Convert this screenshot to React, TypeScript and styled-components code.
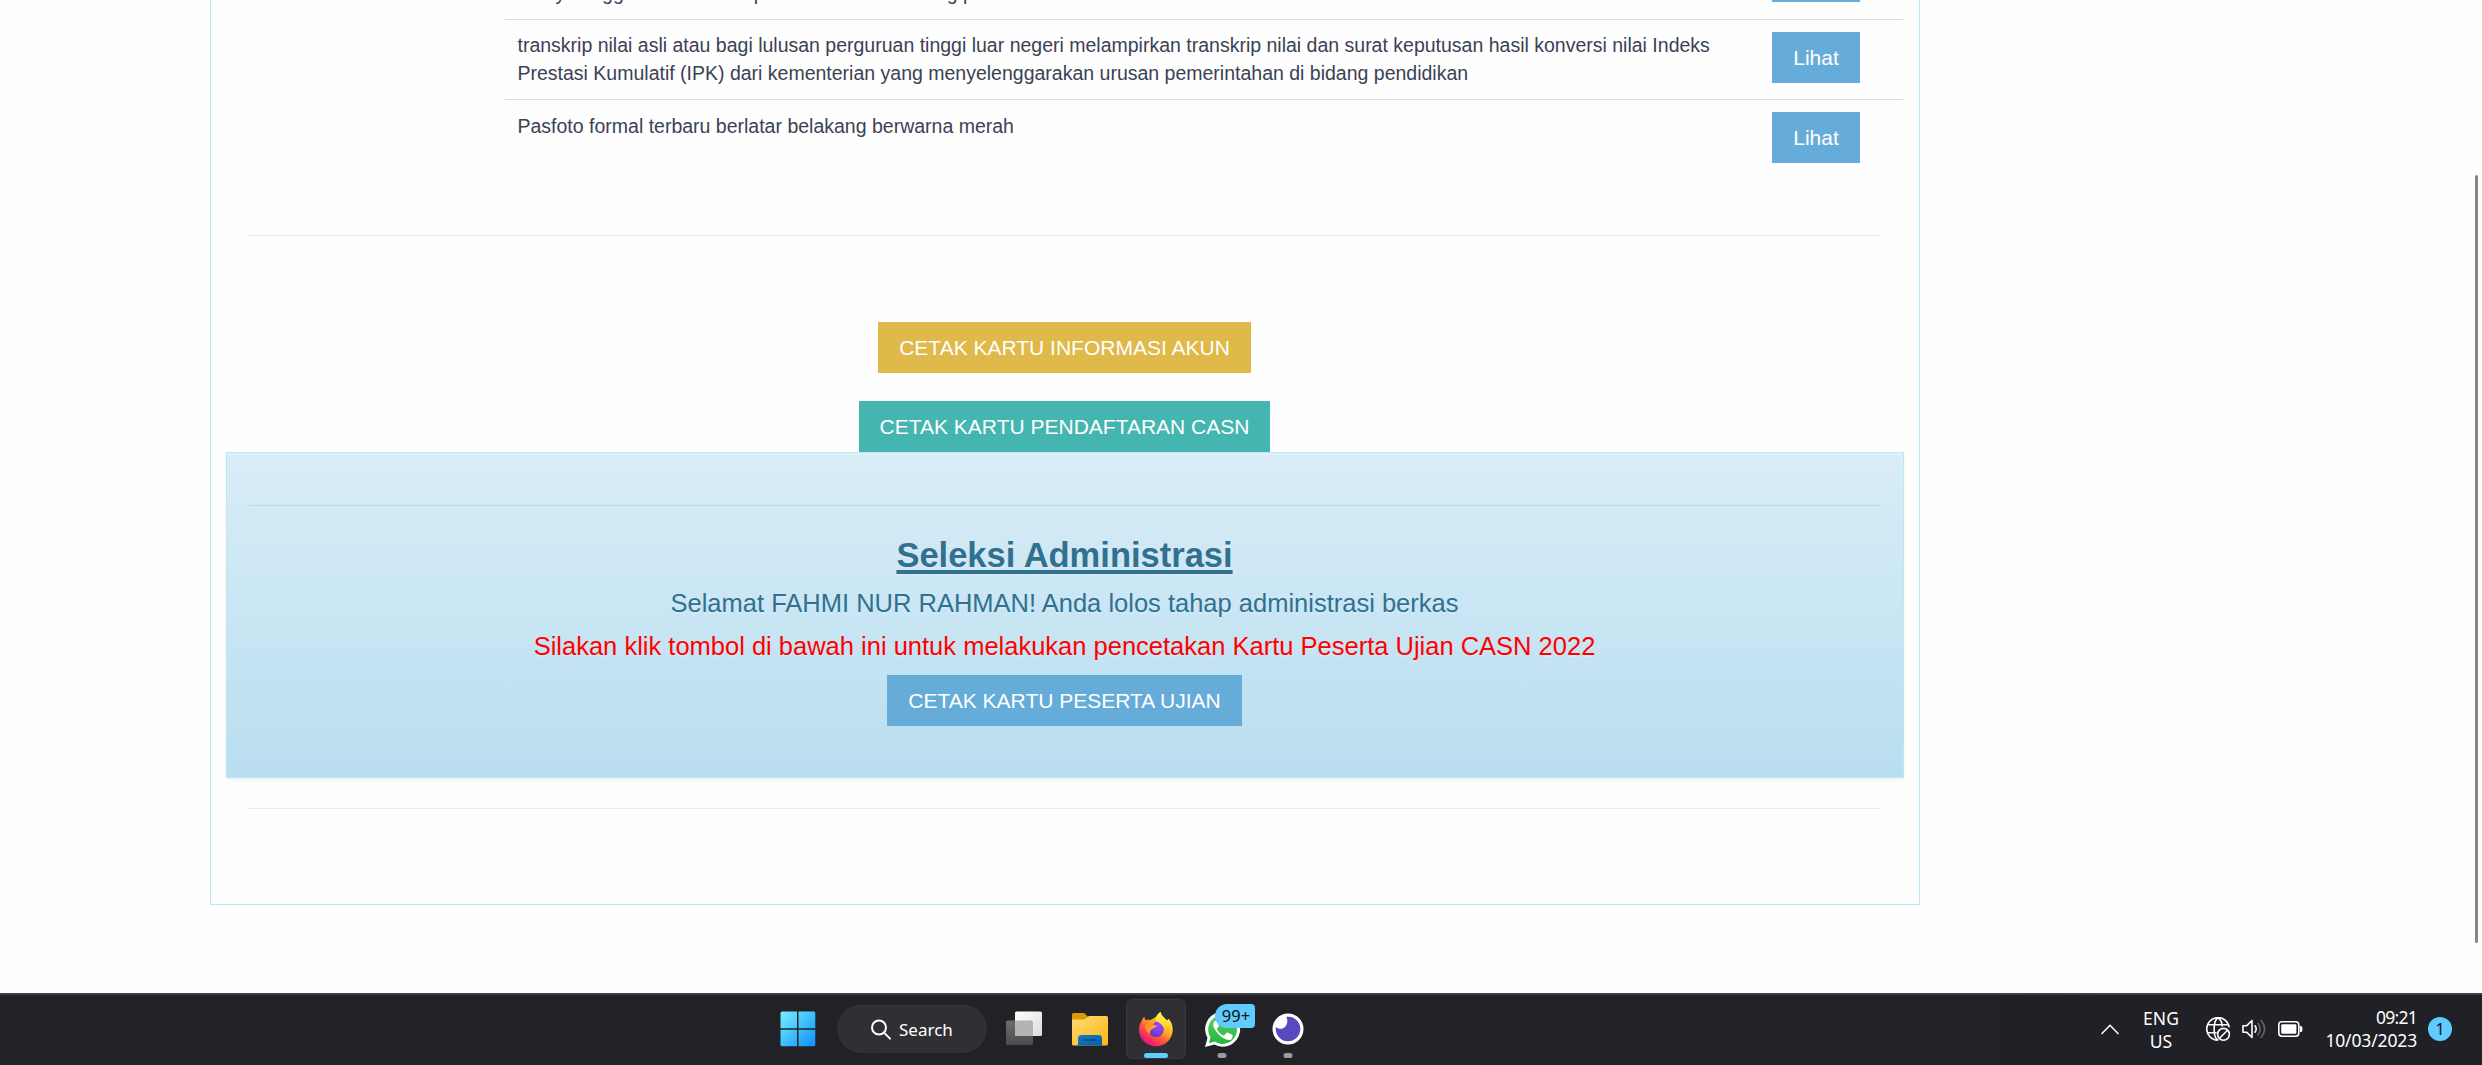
import React from 'react';
import styled, { createGlobalStyle } from 'styled-components';

const GlobalStyle = createGlobalStyle`
  * { box-sizing: border-box; }
  body {
    margin: 0;
    background: #fefefe;
    font-family: "Liberation Sans", Arial, sans-serif;
    overflow: hidden;
  }
`;

const Screen = styled.div`
  display: flex;
  flex-direction: column;
  width: 2482px;
  height: 1065px;
  overflow: hidden;
`;

const Viewport = styled.main`
  position: relative;
  flex: none;
  height: 993px;
  padding-left: 210px;
  overflow: hidden;
`;

const ScrollThumb = styled.div`
  position: absolute;
  top: 175px;
  right: 4px;
  width: 3px;
  height: 768px;
  border-radius: 1.5px;
  background: #868886;
`;

const Panel = styled.section`
  width: 1710px;
  height: 905px;
  border: 1px solid #b8e9f3;
  border-top: 0;
  padding: 0 15px;
  background: #fefefe;
`;

const Documents = styled.div`
  display: flex;
  flex-direction: column;
  justify-content: flex-end;
  width: 1398px;
  height: 179px;
  margin-left: 279px;
  overflow: hidden;
`;

const DocumentRow = styled.div<{ $height?: number }>`
  display: grid;
  flex: none;
  grid-template-columns: 1254.5px 88px;
  align-items: start;
  height: ${(p) => p.$height ?? 80}px;
  padding: 12px 0 0 12.5px;
  border-top: 1px solid #ddd;
`;

const DocumentText = styled.div<{ $raised?: boolean }>`
  margin-top: ${(p) => (p.$raised ? -1 : 0)}px;
  font-size: 19.5px;
  line-height: 28px;
  color: #3a4254;
  white-space: nowrap;
`;

const tones = { blue: '#65acd9', gold: '#dfb949', teal: '#45b5b0' };

const Button = styled.button<{ $tone: keyof typeof tones; $width?: number }>`
  flex: none;
  width: ${(p) => (p.$width ? `${p.$width}px` : 'auto')};
  height: 51px;
  padding: 0;
  border: 0;
  background: ${(p) => tones[p.$tone]};
  color: #fff;
  font: 21px/51px "Liberation Sans", Arial, sans-serif;
  text-align: center;
  white-space: nowrap;
`;

const Divider = styled.hr<{ $tone?: string; $top: number; $right: number }>`
  height: 1px;
  margin: ${(p) => p.$top}px ${(p) => p.$right}px 0 22px;
  border: 0;
  background: ${(p) => p.$tone ?? '#ececec'};
`;

const PrintActions = styled.div`
  display: flex;
  flex-direction: column;
  align-items: center;
  gap: 28px;
  padding: 86px 1px 0 0;
`;

const Notice = styled.div`
  height: 326px;
  padding-right: 1px;
  border: 1px solid #b8e9f3;
  background: linear-gradient(to bottom, #d9edf7 0%, #b9def0 100%);
  box-shadow: inset 0 2px 0 rgba(255, 255, 255, 0.25), 0 2px 3px rgba(0, 0, 0, 0.05);
  color: #31708f;
  text-align: center;
  text-shadow: 0 1.5px 0 rgba(255, 255, 255, 0.2);

  ${Button} {
    margin-top: 15px;
    text-shadow: none;
  }
`;

const NoticeTitle = styled.h3`
  margin: 30px 0 0;
  font-size: 34.5px;
  line-height: 38px;
  font-weight: 700;
  text-decoration: underline;
  text-decoration-thickness: 4px;
  text-underline-offset: 3px;
`;

const NoticeText = styled.p<{ $alert?: boolean }>`
  margin: 15px 0 0;
  font-size: 25.5px;
  line-height: 28px;
  color: ${(p) => (p.$alert ? '#f00' : 'inherit')};
`;

const Taskbar = styled.footer`
  display: flex;
  flex: none;
  justify-content: space-between;
  height: 72px;
  border-top: 2px solid #3f3f43;
  background: linear-gradient(to right, #232228, #222126 60%, #1f2126);
  color: #fff;
  font-family: "Noto Sans", "Open Sans", sans-serif;
  font-size: 17.5px;
`;

const AppStrip = styled.nav`
  display: flex;
  align-items: flex-start;
  padding-left: 765px;
`;

const AppSlot = styled.div<{ $active?: boolean }>`
  position: relative;
  display: flex;
  align-items: center;
  justify-content: center;
  width: 66px;
  height: 60px;
  margin-top: 4px;

  &::before {
    content: "";
    position: absolute;
    inset: 0 3px;
    border-radius: 6px;
    border: 1px solid ${(p) => (p.$active ? '#39393d' : 'transparent')};
    background: ${(p) => (p.$active ? '#2f2f33' : 'transparent')};
  }

  svg {
    position: relative;
    display: block;
  }
`;

const RunMark = styled.span<{ $active?: boolean }>`
  position: absolute;
  left: 50%;
  bottom: 1px;
  width: ${(p) => (p.$active ? 24 : 9)}px;
  height: 5px;
  border-radius: 2.5px;
  background: ${(p) => (p.$active ? '#60cdff' : '#9b9b9d')};
  transform: translateX(-50%);
`;

const CountBadge = styled.span`
  position: absolute;
  top: 5px;
  left: 26px;
  width: 40px;
  height: 24px;
  padding-left: 2px;
  border-radius: 12px 4px 4px 12px;
  background: #5fcbff;
  color: #111;
  font-size: 16.5px;
  line-height: 24px;
  text-align: center;
`;

const SearchPill = styled.div`
  display: flex;
  align-items: center;
  gap: 7px;
  width: 150px;
  height: 48px;
  margin: 10px 4px 0 6px;
  padding-left: 33px;
  border-radius: 24px;
  border-top: 1px solid #37373c;
  background: #302f34;
  font-size: 17px;
`;

const Tray = styled.div`
  display: flex;
  align-items: center;
  height: 68px;
  padding-right: 30px;

  svg {
    display: block;
    flex: none;
  }
`;

const Language = styled.div`
  width: 84px;
  padding-top: 2px;
  line-height: 23px;
  text-align: center;
`;

const Clock = styled.div`
  width: 94px;
  line-height: 23px;
  text-align: right;
  white-space: nowrap;
`;

const ClockTime = styled.div`
  letter-spacing: -0.75px;
`;

const ClockDate = styled.div`
  letter-spacing: -0.15px;
`;

const StatusIcons = styled.div`
  display: flex;
  align-items: center;
  gap: 12px;
  margin: 0 20px 0 3px;
`;

const AlertCount = styled.span`
  width: 24px;
  height: 24px;
  margin-left: 11px;
  border-radius: 50%;
  background: #5fcbff;
  color: #111;
  font-size: 16px;
  line-height: 24px;
  text-align: center;
`;

const WindowsLogo = () => (
  <svg width="36" height="36" viewBox="0 0 36 36">
    <defs>
      <linearGradient id="win" gradientUnits="userSpaceOnUse" x1="0" y1="0" x2="36" y2="36">
        <stop offset="0" stopColor="#7af0ff" />
        <stop offset="0.5" stopColor="#3fc0fb" />
        <stop offset="1" stopColor="#0a8dfa" />
      </linearGradient>
    </defs>
    <g fill="url(#win)">
      <path d="M2 .5h15v16.8H.5V2Q.5.5 2 .5Z" />
      <path d="M18.5.5h15.2q1.6 0 1.6 1.5v15.3H18.5Z" />
      <path d="M.5 18.8h16.5v16.5H2Q.5 35.3.5 33.8Z" />
      <path d="M18.5 18.8h16.8v15q0 1.5-1.5 1.5h-15.3Z" />
    </g>
  </svg>
);

const SearchIcon = () => (
  <svg width="22" height="22" viewBox="0 0 22 22" fill="none" stroke="#fff" strokeWidth="2" strokeLinecap="round">
    <circle cx="9" cy="8.5" r="7" />
    <path d="M14 13.6l6 6" />
  </svg>
);

const TaskViewIcon = () => (
  <svg width="38" height="36" viewBox="0 0 38 36">
    <defs>
      <linearGradient id="tvBack" x1="0" y1="0" x2="1" y2="1">
        <stop offset="0" stopColor="#fff" />
        <stop offset="1" stopColor="#dcdcdc" />
      </linearGradient>
      <linearGradient id="tvFront" x1="0" y1="0" x2="0" y2="1">
        <stop offset="0" stopColor="#6c6c6c" />
        <stop offset="1" stopColor="#4c4c4c" />
      </linearGradient>
    </defs>
    <rect x="1" y="9.5" width="27" height="24.5" rx="1.5" fill="url(#tvFront)" />
    <rect x="10" y=".5" width="27" height="24.5" rx="1.5" fill="url(#tvBack)" />
    <path d="M10 9.5h16.5q1.5 0 1.5 1.5v14H11.5q-1.5 0-1.5-1.5Z" fill="#b4b4b4" />
  </svg>
);

const ExplorerIcon = () => (
  <svg width="36" height="34" viewBox="0 0 36 34">
    <defs>
      <linearGradient id="folder" x1="0" y1="0" x2="1" y2="1">
        <stop offset="0" stopColor="#ffdb75" />
        <stop offset="1" stopColor="#fcb714" />
      </linearGradient>
      <linearGradient id="folderTab" x1="0" y1="0" x2="1" y2="1">
        <stop offset="0" stopColor="#0f7bd0" />
        <stop offset="1" stopColor="#0560a8" />
      </linearGradient>
    </defs>
    <path d="M0 2.5Q0 1 1.5 1h9.5q1.2 0 2 .8L16 5v4H0Z" fill="#dc9a05" />
    <path d="M0 7.5h11.5q1 0 1.8-.8l2.4-2q.8-.7 1.8-.7H34.5q1.5 0 1.5 1.5V32q0 1.500-1.500 1.500h-33Q0 33.500 0 32Z" fill="url(#folder)" />
    <path d="M6 33.5V26.5q0-3.5 3.5-3.5h17q3.500 0 3.500 3.500v7Z" fill="url(#folderTab)" />
    <path d="M11.500 28h13" stroke="#05457c" strokeWidth="1.600" strokeLinecap="round" />
  </svg>
);

const FirefoxIcon = () => (
  <svg width="36" height="36" viewBox="0 0 36 36">
    <defs>
      <linearGradient id="fxBody" x1="0.85" y1="0.1" x2="0.2" y2="0.95">
        <stop offset="0" stopColor="#fff04a" />
        <stop offset="0.35" stopColor="#ffae24" />
        <stop offset="0.6" stopColor="#ff5b36" />
        <stop offset="0.85" stopColor="#f5236b" />
        <stop offset="1" stopColor="#e01585" />
      </linearGradient>
      <linearGradient id="fxFlame" x1="0.5" y1="0" x2="0.6" y2="1">
        <stop offset="0" stopColor="#fff35c" />
        <stop offset="0.6" stopColor="#ffd42d" />
        <stop offset="1" stopColor="#ff9b22" />
      </linearGradient>
      <radialGradient id="fxGlobe" cx="0.65" cy="0.25" r="0.8">
        <stop offset="0" stopColor="#a844f0" />
        <stop offset="0.6" stopColor="#7542e5" />
        <stop offset="1" stopColor="#5a35b0" />
      </radialGradient>
      <linearGradient id="fxFace" x1="0" y1="0" x2="1" y2="0.3">
        <stop offset="0" stopColor="#ff7a28" />
        <stop offset="1" stopColor="#ffb027" />
      </linearGradient>
    </defs>
    <path d="M4 9.5C4.300 8 5.200 6.600 6.300 5.800 6.400 7.200 7 8.300 7.900 9.200 9.500 8.700 11 8.800 12.200 9.200L22 3.500 29 9.500 30.500 7.800C33.500 11 35 15 34.700 19.500 34.200 28.500 27 35.300 18 35.300 8.600 35.300 1 28 1 18.700 1 15.200 2.100 12 4 9.500Z" fill="url(#fxBody)" />
    <circle cx="18.3" cy="18.3" r="7.6" fill="url(#fxGlobe)" />
    <path d="M18 8.500C17.600 5.500 19.700 2.300 22.600.7 23.200 4 25.600 6 28 8.600 31.600 12.500 31.500 19.500 28 24 28.300 19.500 25.800 15.500 22.300 12.500 20.500 11 18.400 10.200 18 8.500Z" fill="url(#fxFlame)" />
    <path d="M7.700 9.300C10 8.500 12 8.900 13.300 10L14.800 13.800 18.700 14.600C18.400 16.400 16.300 16.900 14.400 17.900 12.400 19 11.700 20.700 12.300 22.400 9.200 22 7.400 19.500 7 16.600Z" fill="url(#fxFace)" />
    <path d="M13.300 10C14.400 8.300 16 7.400 17.600 7 16.500 8.500 16.300 10 16.800 11.200L14.800 13.800Z" fill="#ffa52a" />
  </svg>
);

const WhatsAppIcon = () => (
  <svg width="37" height="37" viewBox="0 0 37 37">
    <defs>
      <linearGradient id="wa" x1="0" y1="0" x2="0" y2="1">
        <stop offset="0" stopColor="#5bd066" />
        <stop offset="1" stopColor="#27b43e" />
      </linearGradient>
    </defs>
    <path d="M1 36l2.500-9A17.500 17.500 0 1 1 10.300 33.600Z" fill="#fff" />
    <path d="M4.900 32.200l1.600-5.800A14.400 14.400 0 1 1 10.700 30.600Z" fill="url(#wa)" />
    <path d="M13.500 10.300c-.4-.9-.8-.9-1.300-.9-1 0-3 1.200-3 4.200 0 2.800 2.100 5.500 2.400 5.900.3.400 4.100 6.500 10.100 8.800 5 1.900 6-.1 6.600-1.600.4-1.300.5-2.500.2-2.700-.3-.3-4.500-2.400-5.100-2.500-.4-.1-.8 0-1.200.5l-1.600 2c-.4.5-.8.5-1.400.2-2.700-1.200-4.700-3-6.200-5.700-.3-.6 0-.9.300-1.200.8-.8 1.700-1.700 1.400-2.600Z" fill="#fff" />
  </svg>
);

const EyeIcon = () => (
  <svg width="32" height="32" viewBox="0 0 32 32">
    <circle cx="16" cy="16" r="15.5" fill="#fff" />
    <path d="M14.2 3.800A12.300 12.300 0 1 1 3.900 14C6.500 16.600 11 16.200 13.400 13.400 15.600 10.600 16 6.800 14.200 3.800Z" fill="#5949bf" />
  </svg>
);

const ChevronIcon = () => (
  <svg width="18" height="11" viewBox="0 0 18 11" fill="none" stroke="#fff" strokeWidth="1.5">
    <path d="M.5 10L9 1.300 17.500 10" />
  </svg>
);

const GlobeOffIcon = () => (
  <svg width="24" height="24" viewBox="0 0 24 24" fill="none" stroke="#fff" strokeWidth="1.6">
    <path d="M23.200 10.300A11.300 11.300 0 1 0 11.800 23.200" />
    <path d="M12.500 23C7 22 6.500 4 12 .8 14.800 2.500 16 6 16.300 9.500M1.500 7.800h21M1.500 15.800h9" />
    <circle cx="17.5" cy="17.3" r="5.9" />
    <path d="M13.500 21.300l8-8" />
  </svg>
);

const SpeakerIcon = () => (
  <svg width="24" height="20" viewBox="0 0 24 20" fill="none" strokeWidth="1.6" strokeLinecap="round">
    <path d="M1 6.800h3.500L10 1.500v17L4.500 13.200H1Z" stroke="#fff" strokeLinejoin="round" />
    <path d="M13 6.800q2.400 3.200 0 6.400" stroke="#fff" />
    <path d="M16 4.300q4.300 5.700 0 11.400M19.200 1.500q6.800 8.500 0 17" stroke="#66666a" />
  </svg>
);

const BatteryIcon = () => (
  <svg width="25" height="16" viewBox="0 0 25 16">
    <rect x=".8" y=".8" width="20" height="14.4" rx="3.2" fill="none" stroke="#fff" strokeWidth="1.6" />
    <rect x="3.2" y="3.2" width="15.2" height="9.6" rx="1.2" fill="#fff" />
    <path d="M22 5h.8q1.500 0 1.500 1.500v3q0 1.500-1.500 1.500H22Z" fill="#fff" />
  </svg>
);

export default function App() {
  return (
    <Screen>
      <GlobalStyle />
      <Viewport>
        <Panel>
          <Documents>
            <DocumentRow $height={81}>
              <DocumentText>
                Surat keputusan penyetaraan ijazah dari kementerian yang
                <br />
                menyelenggarakan urusan pemerintahan di bidang pendidikan
              </DocumentText>
              <Button $tone="blue">Lihat</Button>
            </DocumentRow>
            <DocumentRow>
              <DocumentText $raised>
                transkrip nilai asli atau bagi lulusan perguruan tinggi luar negeri melampirkan transkrip nilai dan
                surat keputusan hasil konversi nilai Indeks
                <br />
                Prestasi Kumulatif (IPK) dari kementerian yang menyelenggarakan urusan pemerintahan di bidang
                pendidikan
              </DocumentText>
              <Button $tone="blue">Lihat</Button>
            </DocumentRow>
            <DocumentRow>
              <DocumentText>Pasfoto formal terbaru berlatar belakang berwarna merah</DocumentText>
              <Button $tone="blue">Lihat</Button>
            </DocumentRow>
          </Documents>
          <Divider $top={56} $right={23} />
          <PrintActions>
            <Button $tone="gold" $width={373}>
              CETAK KARTU INFORMASI AKUN
            </Button>
            <Button $tone="teal" $width={411}>
              CETAK KARTU PENDAFTARAN CASN
            </Button>
          </PrintActions>
          <Notice>
            <Divider $top={52} $right={22} $tone="#a6e1ec" />
            <NoticeTitle>Seleksi Administrasi</NoticeTitle>
            <NoticeText>Selamat FAHMI NUR RAHMAN! Anda lolos tahap administrasi berkas</NoticeText>
            <NoticeText $alert>
              Silakan klik tombol di bawah ini untuk melakukan pencetakan Kartu Peserta Ujian CASN 2022
            </NoticeText>
            <Button $tone="blue" $width={355}>
              CETAK KARTU PESERTA UJIAN
            </Button>
          </Notice>
          <Divider $top={30} $right={23} />
        </Panel>
        <ScrollThumb />
      </Viewport>
      <Taskbar>
        <AppStrip>
          <AppSlot>
            <WindowsLogo />
          </AppSlot>
          <SearchPill>
            <SearchIcon />
            Search
          </SearchPill>
          <AppSlot>
            <TaskViewIcon />
          </AppSlot>
          <AppSlot>
            <ExplorerIcon />
          </AppSlot>
          <AppSlot $active>
            <FirefoxIcon />
            <RunMark $active />
          </AppSlot>
          <AppSlot>
            <WhatsAppIcon />
            <CountBadge>99+</CountBadge>
            <RunMark />
          </AppSlot>
          <AppSlot>
            <EyeIcon />
            <RunMark />
          </AppSlot>
        </AppStrip>
        <Tray>
          <ChevronIcon />
          <Language>
            ENG
            <br />
            US
          </Language>
          <StatusIcons>
            <GlobeOffIcon />
            <SpeakerIcon />
            <BatteryIcon />
          </StatusIcons>
          <Clock>
            <ClockTime>09:21</ClockTime>
            <ClockDate>10/03/2023</ClockDate>
          </Clock>
          <AlertCount>1</AlertCount>
        </Tray>
      </Taskbar>
    </Screen>
  );
}
